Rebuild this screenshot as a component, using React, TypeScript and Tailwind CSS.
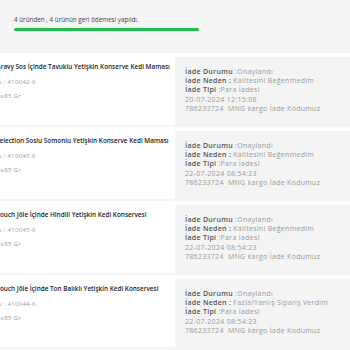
import React from 'react';

const rows = [
  {
    title: 'Gravy Sos İçinde Tavuklu Yetişkin Konserve Kedi Maması',
    code: '410042-6',
    reason: 'Kalitesini Beğenmedim',
    date: '20-07-2024 12:15:08',
  },
  {
    title: 'Selection Soslu Somonlu Yetişkin Konserve Kedi Maması',
    code: '410043-6',
    reason: 'Kalitesini Beğenmedim',
    date: '22-07-2024 08:54:23',
  },
  {
    title: 'Pouch Jöle İçinde Hindili Yetişkin Kedi Konservesi',
    code: '410045-6',
    reason: 'Kalitesini Beğenmedim',
    date: '22-07-2024 08:54:23',
  },
  {
    title: 'Pouch Jöle İçinde Ton Balıklı Yetişkin Kedi Konservesi',
    code: '410044-6',
    reason: 'Fazla/Yanlış Sipariş Verdim',
    date: '22-07-2024 08:54:23',
  },
];

export default function App() {
  return (
    <div className="w-[350px] h-[350px] overflow-hidden bg-[#f5f5f5] font-['Open_Sans',sans-serif]">
      {/* summary */}
      <div className="px-[14px] pt-[15px] h-[53px]">
        <p className="text-[6.3px] leading-[10px] text-[#444]">4 üründen , 4 ürünün geri ödemesi yapıldı.</p>
        <div className="mt-[3px] w-[185px] h-[3px] rounded-full bg-[#1dbf4b]" />
      </div>

      {/* refund rows */}
      <div className="flex flex-col gap-[2px]">
        {rows.map((r) => (
          <div key={r.code} className="flex h-[72px] bg-white shrink-0">
            <div className="w-[175px] shrink-0 overflow-hidden pt-[9px]">
              <p className="ml-[-4px] whitespace-nowrap text-[6.4px] leading-[10px] font-semibold text-[#222]">{r.title}</p>
              <p className="ml-[-24px] mt-[5px] whitespace-nowrap text-[6px] tracking-[0.3px] leading-[10px] text-[#999]">Barkodu : {r.code}</p>
              <p className="ml-[-3px] mt-[4px] text-[6px] tracking-[0.3px] leading-[10px] text-[#999]">4x85 Gr</p>
            </div>
            <div className="flex-1 pt-[4px]">
              <div className="h-[68px] bg-[#f4f4f4] pl-[10px] pt-[10px] text-[7px] tracking-[0.3px] leading-[9.2px] text-[#9a9a9a]">
                <p>
                  <span className="font-semibold text-[#555]">İade Durumu</span> :Onaylandı
                </p>
                <p>
                  <span className="font-semibold text-[#555]">İade Neden :</span> {r.reason}
                </p>
                <p>
                  <span className="font-semibold text-[#555]">İade Tipi</span> :Para İadesi
                </p>
                <p>{r.date}</p>
                <p>786233724&nbsp; MNG kargo İade Kodumuz</p>
              </div>
            </div>
          </div>
        ))}
      </div>
    </div>
  );
}
